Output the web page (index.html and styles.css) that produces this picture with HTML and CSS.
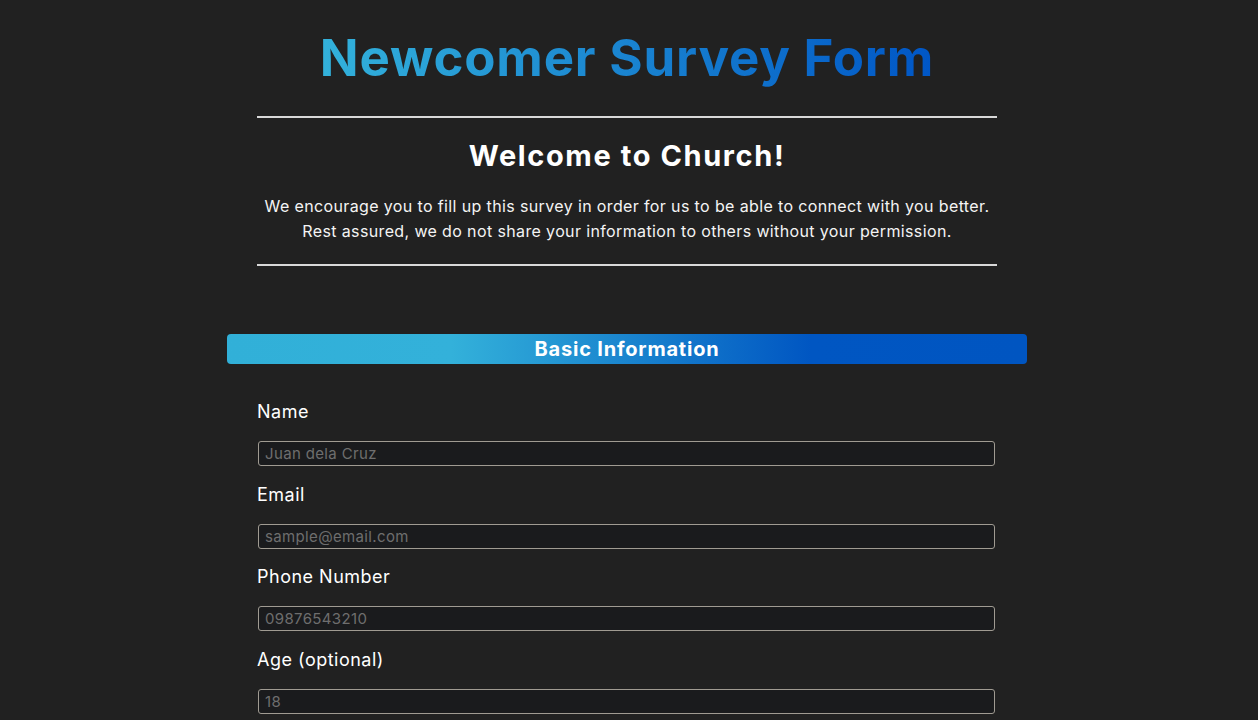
FILE: index.html
```html
<!DOCTYPE html>
<html lang="en">
<head>
<meta charset="utf-8">
<title>Newcomer Survey Form</title>
<link rel="stylesheet" href="styles.css">
</head>
<body>
<header class="intro">
  <h1 class="title">Newcomer Survey Form</h1>
  <hr class="rule">
  <h2 class="welcome">Welcome to Church!</h2>
  <p class="lead">We encourage you to fill up this survey in order for us to be able to connect with you better.<br>Rest assured, we do not share your information to others without your permission.</p>
  <hr class="rule">
</header>
<form class="survey">
  <div class="section-bar">Basic Information</div>
  <div class="fields">
    <label class="field">
      <span class="field-label">Name</span>
      <input class="field-input" type="text" placeholder="Juan dela Cruz">
    </label>
    <label class="field">
      <span class="field-label">Email</span>
      <input class="field-input" type="email" placeholder="sample@email.com">
    </label>
    <label class="field">
      <span class="field-label">Phone Number</span>
      <input class="field-input" type="tel" placeholder="09876543210">
    </label>
    <label class="field">
      <span class="field-label">Age (optional)</span>
      <input class="field-input" type="number" placeholder="18">
    </label>
  </div>
</form>
</body>
</html>
```
FILE: styles.css
```css
html, body {
  margin: 0;
  background: #212121;
}
body {
  padding: 0 4px 0 0;
  color: #f2f2f2;
  font-family: Inter, "Noto Sans", sans-serif;
}
.intro {
  width: 740px;
  margin: 0 auto;
  text-align: center;
}
.title {
  margin: 28px 0 0;
  font-size: 51px;
  line-height: 60px;
  font-weight: 700;
  letter-spacing: 0.8px;
  background: linear-gradient(90deg, #33b2db 0%, #0056c6 100%);
  -webkit-background-clip: text;
  background-clip: text;
  color: transparent;
  display: inline-block;
}
.rule {
  border: 0;
  height: 2px;
  background: #d8d8d8;
  margin: 0;
}
.intro .rule:first-of-type {
  margin-top: 28px;
}
.welcome {
  margin: 20px 0 0;
  font-size: 29px;
  line-height: 36px;
  font-weight: 700;
  letter-spacing: 1.6px;
  color: #ffffff;
}
.lead {
  margin: 20px 0 20px;
  font-size: 16px;
  line-height: 25px;
  letter-spacing: 0.37px;
  color: #f4f4f4;
}
.survey {
  width: 800px;
  margin: 68px auto 0;
}
.section-bar {
  height: 30px;
  line-height: 30px;
  border-radius: 4px;
  background: linear-gradient(90deg, #31b0d8 0%, #33b1da 28%, #0056c2 73%, #0055c1 100%);
  color: #ffffff;
  font-weight: 700;
  font-size: 20px;
  letter-spacing: 0.8px;
  text-align: center;
}
.fields {
  width: 740px;
  margin: 36px auto 0;
  display: flex;
  flex-direction: column;
  gap: 16.67px;
}
.field {
  display: flex;
  flex-direction: column;
  gap: 17px;
}
.field-label {
  font-size: 18px;
  line-height: 24px;
  letter-spacing: 0.5px;
  color: #ffffff;
}
.field-input {
  box-sizing: border-box;
  margin: 0 2px 0 1px;
  height: 25px;
  padding: 0 6px;
  border: 1px solid #a09b92;
  border-radius: 3px;
  background: #1a1b1d;
  color: #dddddd;
  font-family: inherit;
  font-size: 15px;
  letter-spacing: 0.35px;
  outline: none;
}
.field-input::placeholder {
  color: #6e6e6e;
}
.field-input::-webkit-outer-spin-button,
.field-input::-webkit-inner-spin-button {
  -webkit-appearance: none;
  margin: 0;
}
```
